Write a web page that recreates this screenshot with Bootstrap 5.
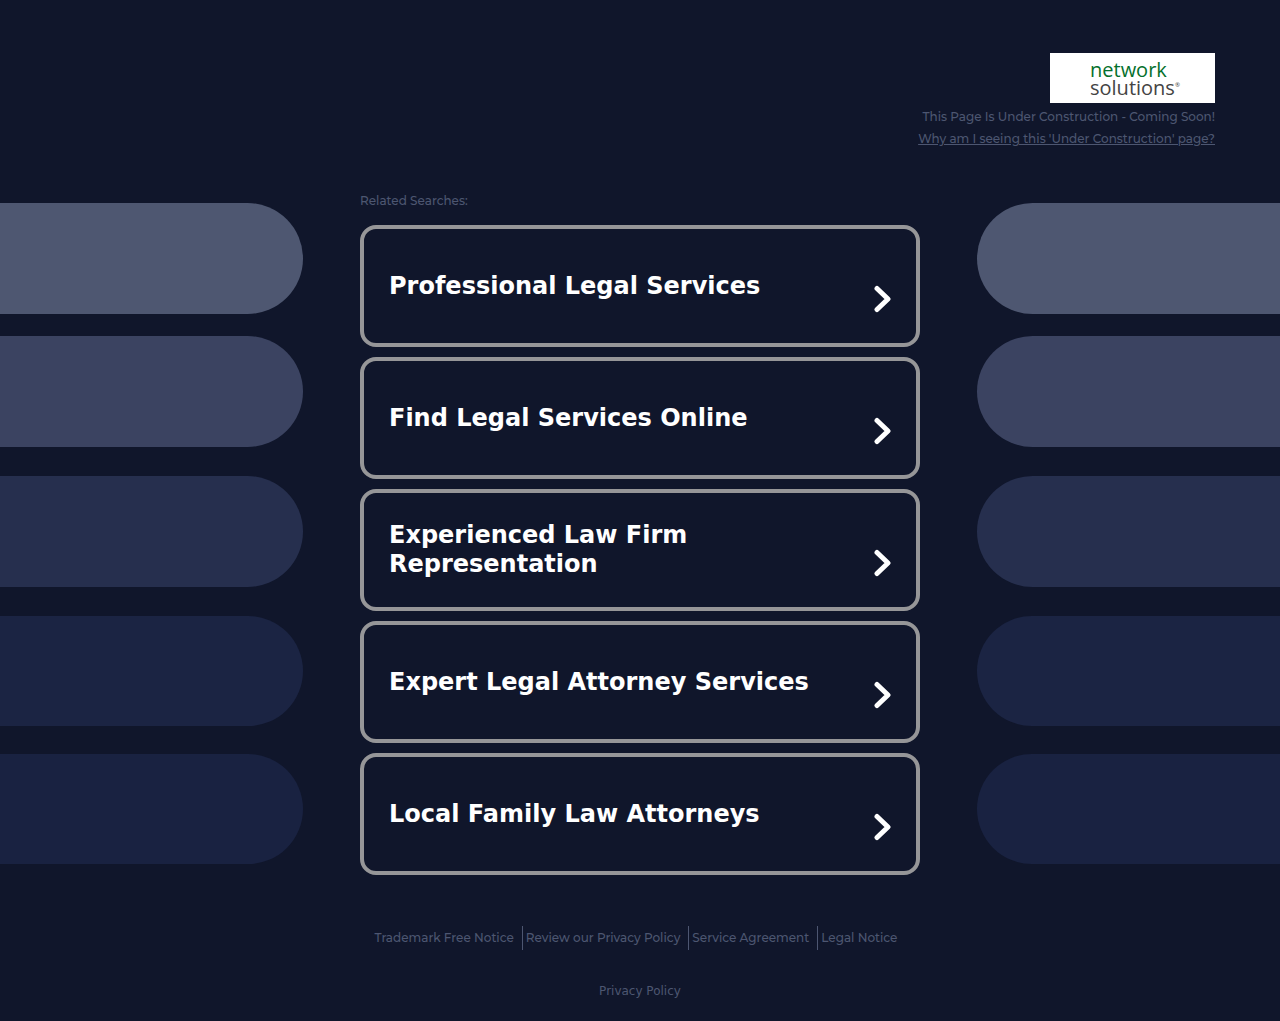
<!DOCTYPE html>
<html lang="en">
<head>
<meta charset="utf-8">
<meta name="viewport" content="width=device-width, initial-scale=1">
<title>Under Construction</title>
<link href="https://cdn.jsdelivr.net/npm/bootstrap@5.3.0/dist/css/bootstrap.min.css" rel="stylesheet">
<style>
body{background:#10162b;color:#4d5671;font:500 12px/22px Montserrat,Inter,"Liberation Sans",sans-serif}
a{color:inherit}
.site-head{padding:53px 65px 0;min-height:190px}
.brand-box{width:165px;height:50px;background:#fff;padding:8px 0 0 40px;margin-bottom:3px;color:#444;font:500 20px/18px "Open Sans","Noto Sans",sans-serif;text-decoration:none}
.brand-box .net{color:#04702c}
.brand-box sup{font-size:6px;line-height:0;top:-8px}
.stage{gap:57px}
.pills{padding-top:13px;flex:1 1 0;min-width:0}
.pill{height:111px;margin-bottom:29px;background:#262f4e}
.pills .pill{border-radius:0 56px 56px 0}
.pills.right .pill{border-radius:56px 0 0 56px}
.pill:nth-child(1){background:#4e5771;margin-bottom:22px}
.pill:nth-child(2){background:#3b4361}
.pill:nth-child(4){background:#1b2443;height:110px;margin-bottom:28px}
.pill:nth-child(5){background:#192241;height:110px;margin-bottom:0}
.center{width:560px;max-width:100%}
.results{gap:10px;margin-top:13px}
.result{min-height:122px;border:4px solid #969698;border-radius:16px;padding:0 25px;color:#fff;font:700 24px/29px "DejaVu Sans",sans-serif}
.result:hover{color:#fff;background:#1b2443}
.result svg{margin-top:26px;flex:none}
.result span{max-width:430px}
.foot-links{margin-top:51px;padding-right:3px;line-height:24px}
.foot-links a{padding:0 8px 0 3px}
.foot-links li+li{border-left:1px solid #4d5671}
.policy{margin:30px 0 20px;font:400 12px/22px "DejaVu Sans",sans-serif}
@media (max-width:767px){.pills{display:none}.stage{padding:0 12px}}
</style>
<script src="https://cdn.jsdelivr.net/npm/bootstrap@5.3.0/dist/js/bootstrap.bundle.min.js" defer></script>
</head>
<body>
<header class="site-head d-flex flex-column align-items-end text-end">
  <a class="brand-box text-start d-block" href="#"><span class="net">network</span><br>solutions<sup>®</sup></a>
  <div>This Page Is Under Construction - Coming Soon!</div>
  <a href="#">Why am I seeing this 'Under Construction' page?</a>
</header>
<main class="stage d-flex justify-content-center">
  <div class="pills" aria-hidden="true"><div class="pill"></div><div class="pill"></div><div class="pill"></div><div class="pill"></div><div class="pill"></div></div>
  <section class="center">
    <div>Related Searches:</div>
    <nav class="results d-flex flex-column" aria-label="Related searches">
      <a class="result d-flex align-items-center justify-content-between text-decoration-none" href="#"><span>Professional Legal Services</span><svg width="17" height="28" viewBox="0 0 17 28" fill="none" stroke="#fff" stroke-width="5" stroke-linecap="round" stroke-linejoin="round" aria-hidden="true"><path d="M3 3.5 14 14 3 24.5"/></svg></a>
      <a class="result d-flex align-items-center justify-content-between text-decoration-none" href="#"><span>Find Legal Services Online</span><svg width="17" height="28" viewBox="0 0 17 28" fill="none" stroke="#fff" stroke-width="5" stroke-linecap="round" stroke-linejoin="round" aria-hidden="true"><path d="M3 3.5 14 14 3 24.5"/></svg></a>
      <a class="result d-flex align-items-center justify-content-between text-decoration-none" href="#"><span>Experienced Law Firm Representation</span><svg width="17" height="28" viewBox="0 0 17 28" fill="none" stroke="#fff" stroke-width="5" stroke-linecap="round" stroke-linejoin="round" aria-hidden="true"><path d="M3 3.5 14 14 3 24.5"/></svg></a>
      <a class="result d-flex align-items-center justify-content-between text-decoration-none" href="#"><span>Expert Legal Attorney Services</span><svg width="17" height="28" viewBox="0 0 17 28" fill="none" stroke="#fff" stroke-width="5" stroke-linecap="round" stroke-linejoin="round" aria-hidden="true"><path d="M3 3.5 14 14 3 24.5"/></svg></a>
      <a class="result d-flex align-items-center justify-content-between text-decoration-none" href="#"><span>Local Family Law Attorneys</span><svg width="17" height="28" viewBox="0 0 17 28" fill="none" stroke="#fff" stroke-width="5" stroke-linecap="round" stroke-linejoin="round" aria-hidden="true"><path d="M3 3.5 14 14 3 24.5"/></svg></a>
    </nav>
  </section>
  <div class="pills right" aria-hidden="true"><div class="pill"></div><div class="pill"></div><div class="pill"></div><div class="pill"></div><div class="pill"></div></div>
</main>
<footer>
  <ul class="foot-links list-unstyled d-flex flex-wrap justify-content-center mb-0">
    <li><a class="text-decoration-none" href="#">Trademark Free Notice</a></li>
    <li><a class="text-decoration-none" href="#">Review our Privacy Policy</a></li>
    <li><a class="text-decoration-none" href="#">Service Agreement</a></li>
    <li><a class="text-decoration-none" href="#">Legal Notice</a></li>
  </ul>
  <div class="policy text-center"><a class="text-decoration-none" href="#">Privacy Policy</a></div>
</footer>
</body>
</html>
